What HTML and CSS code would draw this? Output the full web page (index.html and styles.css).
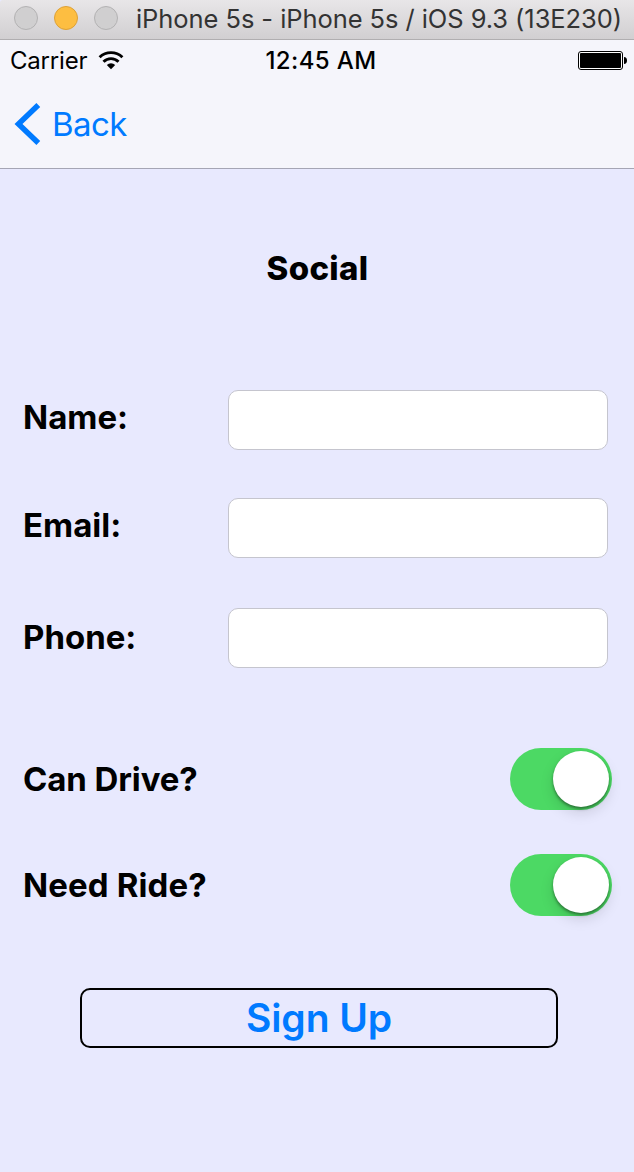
FILE: index.html
```html
<!DOCTYPE html>
<html lang="en">
<head>
<meta charset="utf-8">
<title>Social</title>
<link rel="stylesheet" href="styles.css">
</head>
<body>
<div class="titlebar">
  <span class="light"></span><span class="light amber"></span><span class="light"></span>
  <span class="window-title">iPhone 5s - iPhone 5s / iOS 9.3 (13E230)</span>
</div>
<header class="navbar">
  <div class="status">
    <div class="carrier"><span class="carrier-name">Carrier</span>
      <svg class="wifi" width="26" height="19" viewBox="0 0 26 19"><g fill="none" stroke="#000" stroke-width="2.900"><path d="M1.600 6.200a16.400 16.400 0 0 1 22.800 0"/><path d="M5.500 10.800a10.500 10.500 0 0 1 15 0"/></g><path d="M8.800 14a6.200 6.200 0 0 1 8.400 0L13 18.200z"/></svg>
    </div>
    <span class="time">12:45 AM</span>
    <svg class="battery" width="50" height="19" viewBox="0 0 50 19"><rect x=".5" y=".5" width="44" height="18" rx="2.5" fill="#fff" stroke="#000"/><rect x="2" y="2" width="41" height="15" rx="1"/><path d="M46 6c2 0 3 1.500 3 3.500s-1 3.500-3 3.500z"/></svg>
  </div>
  <a class="back"><svg width="27" height="42" viewBox="0 0 27 42"><path d="M24.300 2L4.500 21l19.800 19" fill="none" stroke="#007aff" stroke-width="5.500"/></svg><span class="back-text">Back</span></a>
</header>
<main class="form">
  <h1 class="heading"><span>Social</span></h1>
  <div class="row"><label class="label raised name">Name:</label><input class="field" type="text"></div>
  <div class="row email-row"><label class="label raised email">Email:</label><input class="field" type="text"></div>
  <div class="row phone-row"><label class="label nudged phone">Phone:</label><input class="field" type="text"></div>
  <div class="row drive-row"><span class="label drive">Can Drive?</span><span class="switch"><span class="knob"></span></span></div>
  <div class="row ride-row"><span class="label ride">Need Ride?</span><span class="switch"><span class="knob"></span></span></div>
  <button class="signup"><span>Sign Up</span></button>
</main>
</body>
</html>
```
FILE: styles.css
```css
* { box-sizing: border-box; }
body { margin: 0; height: 1172px; background: #e8e9fe; font-family: Inter, "Liberation Sans", sans-serif; color: #000; overflow: hidden; }
.titlebar { display: flex; align-items: center; height: 40px; padding: 0 0 3px 14px; background: linear-gradient(#e8e6e8, #d1cfd1); border-bottom: 1px solid #b0aeb0; border-top-left-radius: 3px; }
.light { flex: none; width: 24px; height: 24px; margin-right: 16px; border: 1px solid #b3b2b3; border-radius: 50%; background: #d0cfd0; }
.light.amber { background: #fdbe41; border-color: #dda137; }
.window-title { margin-left: 2px; padding-top: 1px; font-size: 25.500px; letter-spacing: -0.070px; color: #333; white-space: nowrap; }
.navbar { height: 129px; background: #f5f5fb; border-bottom: 1px solid #a5a5b4; }
.status { display: grid; grid-template-columns: 1fr auto 1fr; align-items: center; height: 42px; padding: 0 6px 0 10px; }
.carrier { display: flex; align-items: center; gap: 11px; }
.carrier-name { margin-top: -1px; font-size: 24px; letter-spacing: -0.200px; }
.wifi { margin-top: -1px; }
.time { margin-top: -2px; padding-left: 4px; font-size: 24px; font-weight: 550; letter-spacing: 0.400px; }
.battery { justify-self: end; margin-top: -1px; }
.back { display: flex; align-items: center; gap: 11px; width: 130px; height: 84px; padding-left: 14px; color: #007aff; }
.back-text { font-size: 33px; letter-spacing: -0.600px; }
.form { padding: 0 22px; }
.heading { height: 60px; margin: 69px 0 0; padding-left: 1px; font-size: 33px; letter-spacing: 0.300px; line-height: 60px; text-align: center; font-weight: 800; }
.row { display: flex; align-items: center; justify-content: space-between; height: 60px; padding-right: 4px; margin-top: 92px; }
.label { padding-left: 1px; font-size: 33px; font-weight: 680; letter-spacing: 0; line-height: 60px; white-space: nowrap; }
.raised { padding-bottom: 6px; }
.nudged { padding-bottom: 2px; }
.email-row { margin-top: 48px; }
.phone-row { margin-top: 50px; }
.drive-row, .ride-row { height: 62px; padding-right: 0; }
.drive-row { margin-top: 80px; }
.ride-row { margin-top: 44px; }
.drive { letter-spacing: -0.100px; }
.ride { letter-spacing: 0.120px; }
.field { width: 380px; height: 60px; padding: 0 14px; border: 1px solid #c5c5ce; border-radius: 10px; background: #fff; font: 28px Inter, sans-serif; outline: 0; }
.switch { display: flex; justify-content: flex-end; width: 102px; height: 62px; padding: 3px; border-radius: 31px; background: #4cd964; }
.knob { width: 56px; height: 56px; border-radius: 50%; background: #fff; box-shadow: 0 6px 14px rgba(0,0,0,.13), 0 2px 3px rgba(0,0,0,.4); }
.signup { display: block; width: 478px; height: 60px; margin: 72px 0 0 58px; padding: 0; border: 2px solid #000; border-radius: 10px; background: transparent; color: #007aff; font: 600 39px/56px Inter, sans-serif; letter-spacing: -0.100px; text-align: center; }
```
